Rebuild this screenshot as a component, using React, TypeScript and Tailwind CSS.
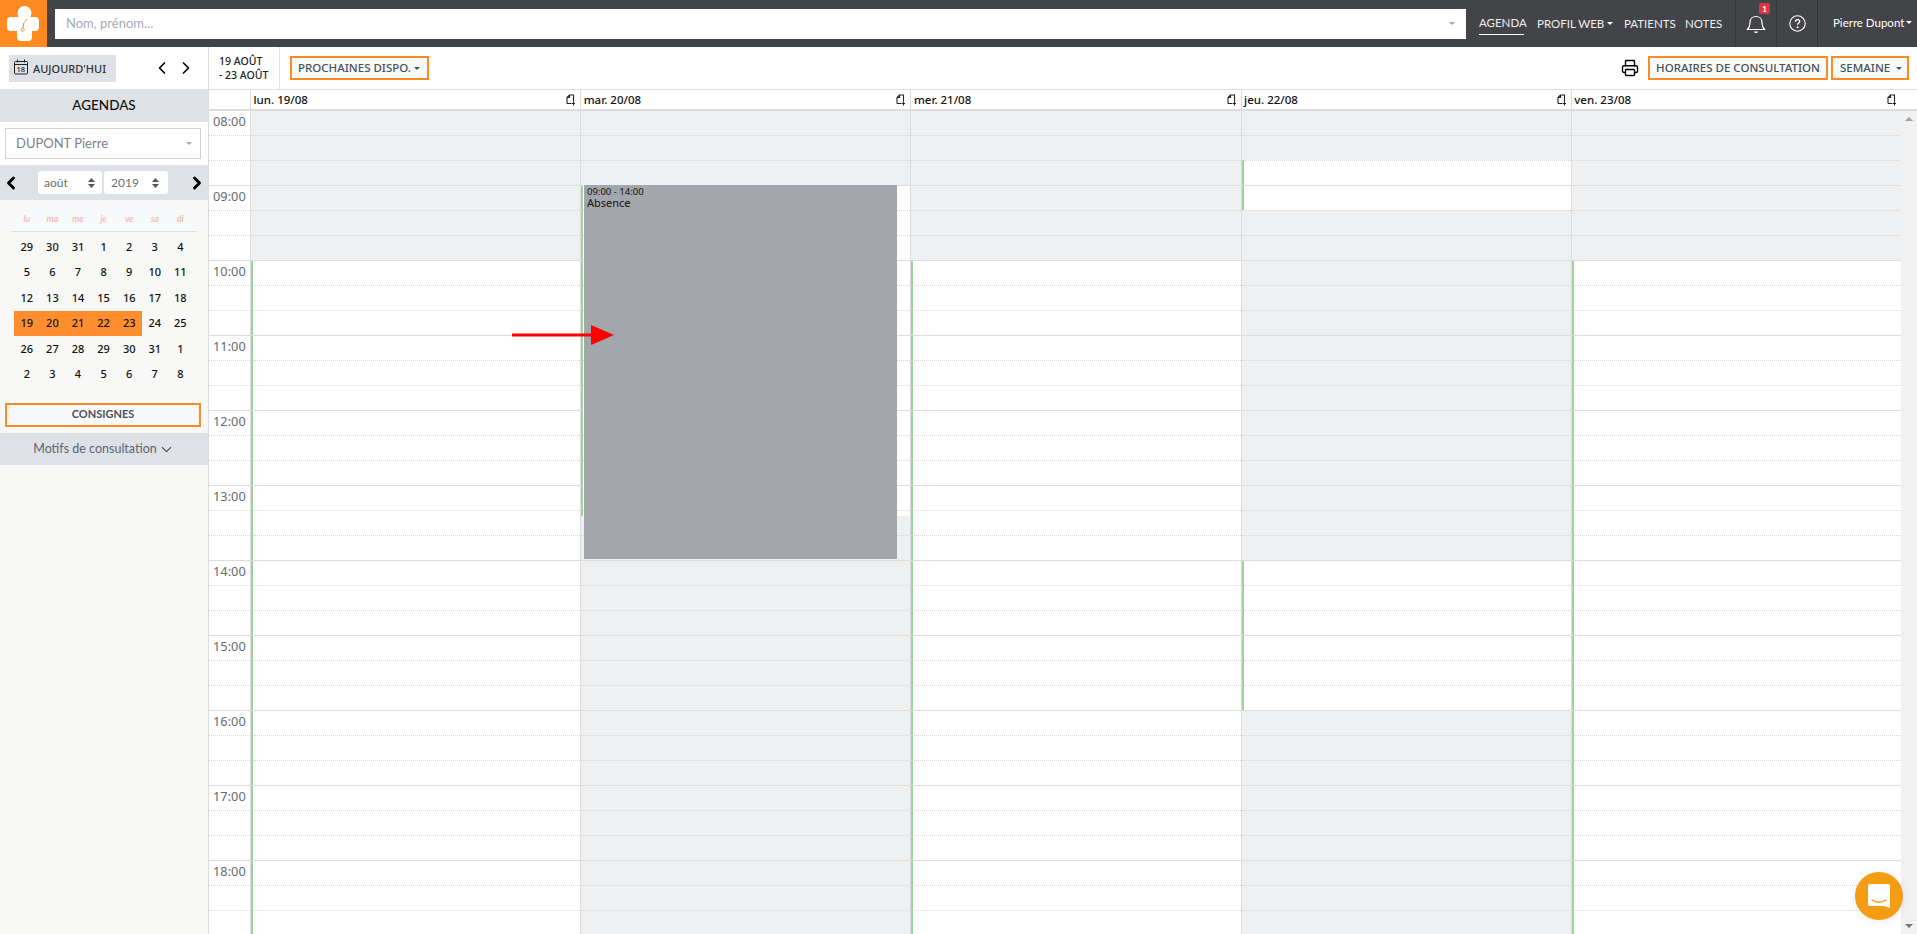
import { ChevronDown, ChevronLeft, ChevronRight, Printer } from "lucide-react";

const SANS = "font-['Lato','Open_Sans',sans-serif]";
const NOTO = "font-['Noto_Sans','Open_Sans',sans-serif]";

const CAL_WEEKS = [
  [29, 30, 31, 1, 2, 3, 4],
  [5, 6, 7, 8, 9, 10, 11],
  [12, 13, 14, 15, 16, 17, 18],
  [19, 20, 21, 22, 23, 24, 25],
  [26, 27, 28, 29, 30, 31, 1],
  [2, 3, 4, 5, 6, 7, 8],
];
const WEEK_DAYS = ["lu", "ma", "me", "je", "ve", "sa", "di"];
const HOURS = ["08:00", "09:00", "10:00", "11:00", "12:00", "13:00", "14:00", "15:00", "16:00", "17:00", "18:00"];
const SLOTS = Array.from({ length: 33 }, (_, i) => i);

// each day is a stack of [height, open] blocks from 08:00 down
const DAYS: { label: string; blocks: [number, boolean][] }[] = [
  { label: "lun. 19/08", blocks: [[149, false], [680, true]] },
  { label: "mar. 20/08", blocks: [[74, false], [331, true], [420, false]] },
  { label: "mer. 21/08", blocks: [[149, false], [680, true]] },
  { label: "jeu. 22/08", blocks: [[49, false], [50, true], [350, false], [150, true], [230, false]] },
  { label: "ven. 23/08", blocks: [[149, false], [680, true]] },
];

function Logo() {
  return (
    <svg width="47" height="47" viewBox="0 0 47 47">
      <circle cx="24.5" cy="13" r="7" fill="#fff" />
      <rect x="7" y="17" width="32" height="14" rx="4" fill="#fff" />
      <rect x="17" y="17" width="15" height="24" rx="4" fill="#fff" />
      <path d="M27 19c-1 2-3 3-3.5 5-.3 1.5 0 2.5-.5 4" fill="none" stroke="#ff8a22" strokeWidth="1" />
      <circle cx="22.7" cy="29.7" r="1.5" fill="none" stroke="#ff8a22" strokeWidth="1" />
    </svg>
  );
}

function Caret({ className }: { className: string }) {
  return <span className={`inline-block border-x-[3.5px] border-t-[3.5px] border-x-transparent ${className}`} />;
}

function UpDown() {
  return (
    <svg width="7" height="10" viewBox="0 0 7 10" fill="#555">
      <path d="M3.5 0 7 4H0zM3.5 10 0 6h7z" />
    </svg>
  );
}

function NoteIcon() {
  return (
    <svg width="10" height="12" viewBox="0 0 10 12" fill="none" stroke="#222" strokeWidth="1.1" className="shrink-0">
      <path d="M1 9.5V3.5L3.5 1H7.5v6.5" />
      <path d="M1 9.5h4.5M3.5 1v2.5H1" />
      <path d="M7.5 7.5v4M6 9.5h3" />
    </svg>
  );
}

function Bell() {
  return (
    <svg width="20" height="21" viewBox="0 0 20 21" fill="none" stroke="#fff" strokeWidth="1.2">
      <path d="M1.5 16.5c2-2 2.5-3 2.5-7 0-3.5 2.5-6 6-6s6 2.5 6 6c0 4 .5 5 2.5 7z" />
      <path d="M8.5 18.5c.5 1.2 2.5 1.2 3 0" strokeWidth="1.4" />
    </svg>
  );
}

function ChatIcon() {
  return (
    <svg width="24" height="27" viewBox="0 0 24 27">
      <path d="M3 1h18a2 2 0 0 1 2 2v22l-6-2H3a2 2 0 0 1-2-2V3a2 2 0 0 1 2-2z" fill="#fff" />
      <path d="M5 17c4 3 10 3 14 0" fill="none" stroke="#f49c14" strokeWidth="1.4" strokeLinecap="round" />
    </svg>
  );
}

function OrangeButton({ label, caret, className }: { label: string; caret?: boolean; className: string }) {
  return (
    <div className={`flex h-[24px] items-center whitespace-nowrap border-2 border-[#ff8a22] bg-[#f8f9fb] text-[11.5px] font-medium text-[#4a5058] ${NOTO} ${className}`}>
      <span>{label}</span>
      {caret && <Caret className="border-t-[#4a5058]" />}
    </div>
  );
}

function TopBar() {
  return (
    <div className={`flex h-[47px] items-center bg-[#434447] text-white ${SANS}`}>
      <div className="flex h-[47px] w-[47px] shrink-0 items-center justify-center bg-[#ff8a22]">
        <Logo />
      </div>
      <div className="ml-[8px] flex h-[30px] w-[1411px] shrink-0 items-center justify-between bg-white px-[11px]">
        <span className="text-[13px] text-[#a8abb0]">Nom, prénom...</span>
        <Caret className="border-t-[#a8a8a8]" />
      </div>
      <nav className="ml-[13px] flex items-center text-[11.5px] text-[#eceef0]">
        <span className="w-[58px] pt-[1px]">
          <span className="block w-[45px] border-b border-white pb-[1px] leading-[20px]">AGENDA</span>
        </span>
        <span className="flex w-[87px] items-center gap-[3px]">
          PROFIL WEB
          <Caret className="border-t-white" />
        </span>
        <span className="w-[61px]">PATIENTS</span>
        <span className="w-[50px]">NOTES</span>
      </nav>
      <div className="relative flex h-[47px] w-[41px] items-center justify-center border-l border-[#333437]">
        <Bell />
        <span className="absolute left-[23px] top-[3px] flex h-[11px] w-[11px] items-center justify-center rounded-[2px] bg-[#dc3545] text-[8px] font-bold leading-none">1</span>
      </div>
      <div className="flex h-[47px] w-[41px] items-center justify-center border-l border-[#333437]">
        <svg width="17" height="17" viewBox="0 0 17 17" fill="none" stroke="#fff" strokeWidth="1.1">
          <circle cx="8.5" cy="8.5" r="7.7" />
          <path d="M6.5 6.8c0-2.8 4.2-2.8 4.2-.3 0 1.6-2.1 1.6-2.1 3.3" strokeWidth="1.3" />
          <circle cx="8.6" cy="12.2" r=".5" fill="#fff" />
        </svg>
      </div>
      <div className="flex h-[47px] flex-1 items-center gap-[2px] border-l border-[#333437] pb-[2px] pl-[15px] text-[11.5px]">
        Pierre Dupont
        <Caret className="border-t-white" />
      </div>
    </div>
  );
}

function Sidebar() {
  return (
    <aside className={`flex w-[209px] shrink-0 flex-col border-r border-[#ddd] bg-[#f8f8f6] ${SANS}`}>
      <div className="flex h-[42px] items-center bg-white pl-[9px]">
        <div className={`flex h-[27px] w-[107px] items-center gap-[5px] whitespace-nowrap bg-[#dee1e6] pl-[5px] text-[11px] font-medium text-[#333] ${NOTO}`}>
          <svg width="14" height="16" viewBox="0 0 14 16" fill="none" stroke="#222" strokeWidth="1" className="-mt-[2px]">
            <rect x=".5" y="2.5" width="13" height="12.5" rx="1" />
            <path d="M.5 5.5h13M3.5 .5v3M10.5 .5v3" />
            <text x="2.5" y="13" fontSize="7.5" fill="#222" stroke="none">18</text>
          </svg>
          <span className="pt-[2px]">AUJOURD'HUI</span>
        </div>
        <ChevronLeft size={20} strokeWidth={2} className="ml-[36px] text-black" />
        <ChevronRight size={20} strokeWidth={2} className="ml-[4px] text-black" />
      </div>
      <div className="flex h-[33px] items-center justify-center bg-[#dee1e6] pb-[1px] text-[13.5px] font-medium text-[#111]">AGENDAS</div>
      <div className="flex h-[43px] items-center bg-white pl-[5px] pr-[7px]">
        <div className="flex h-[31px] w-full items-center justify-between border border-[#cfd3d9] bg-white pl-[10px] pr-[8px] text-[13px] text-[#7c8187]">
          DUPONT Pierre
          <Caret className="border-t-[#a8a8a8]" />
        </div>
      </div>
      <div className="flex h-[35px] items-center bg-[#dee1e6]">
        <ChevronLeft size={20} strokeWidth={3.5} className="ml-[1px] w-[20px] text-black" />
        <div className="ml-[17px] flex h-[23px] w-[64px] items-center justify-between rounded-[3px] bg-white pl-[6px] pr-[7px] text-[12px] text-[#6b7076]">
          août
          <UpDown />
        </div>
        <div className="ml-[2px] flex h-[23px] w-[64px] items-center justify-between rounded-[3px] bg-white pl-[7px] pr-[9px] text-[12px] text-[#6b7076]">
          2019
          <UpDown />
        </div>
        <ChevronRight size={20} strokeWidth={3.5} className="ml-[19px] text-black" />
      </div>
      <div className="mx-[11px] mt-[7px] flex h-[25px] items-center border-b border-[#dee1e6] bg-[#f8f9fb] pl-[3px] pr-[1px]">
        {WEEK_DAYS.map((d) => (
          <span key={d} className="w-[25.6px] text-center text-[9px] italic text-[#ffa99a]">{d}</span>
        ))}
      </div>
      <div className="ml-[14px] mt-[2px]">
        {CAL_WEEKS.map((week, w) => (
          <div key={w} className="flex h-[25.5px]">
            {week.map((d, i) => (
              <span
                key={i}
                className={`flex h-full w-[25.6px] items-center justify-center text-[11px] font-medium text-[#111] ${NOTO} ${w === 3 && i < 5 ? "bg-[#ff8f2e]" : ""}`}
              >
                {d}
              </span>
            ))}
          </div>
        ))}
      </div>
      <div className="ml-[5px] mr-[7px] mt-[16px] flex h-[24px] items-center justify-center border-2 border-[#ff8a22] bg-[#f8f9fb] pb-[1px] text-[11px] font-bold text-[#4a5058]">
        CONSIGNES
      </div>
      <div className="mt-[6px] flex h-[32px] items-center justify-center gap-[1px] bg-[#dee1e6] text-[12.5px] text-[#5d6570]">
        Motifs de consultation
        <ChevronDown size={17} strokeWidth={1.5} className="text-[#444]" />
      </div>
    </aside>
  );
}

function Toolbar() {
  return (
    <div className={`flex h-[42px] items-center bg-white ${NOTO}`}>
      <div className="flex h-[42px] w-[71px] shrink-0 flex-col justify-center border-r border-[#e3e3e3] pl-[10px] text-[10.5px] font-medium leading-[14px] text-[#222]">
        <span>19 AOÛT</span>
        <span>- 23 AOÛT</span>
      </div>
      <OrangeButton label="PROCHAINES DISPO." caret className="ml-[10px] w-[139px] gap-[3px] pl-[6px]" />
      <div className="flex-1" />
      <Printer size={18} strokeWidth={1.8} className="mr-[9px] text-black" />
      <OrangeButton label="HORAIRES DE CONSULTATION" className="w-[180px] justify-center" />
      <OrangeButton label="SEMAINE" caret className="ml-[3px] mr-[8px] w-[78px] gap-[6px] pl-[7px]" />
    </div>
  );
}

function DayColumn({ blocks }: { blocks: [number, boolean][] }) {
  return (
    <div className="relative min-w-0 flex-1 border-l border-[#ddd]">
      {blocks.map(([h, open], i) => (
        <div
          key={i}
          style={{ height: h }}
          className={open ? "border-l-2 border-[#9dd49c] bg-white" : "bg-[#eff0f2]"}
        />
      ))}
      <div className="absolute inset-0">
        {SLOTS.map((s) => (
          <div key={s} className={`h-[25px] border-b ${s % 3 === 2 ? "border-solid border-[#ddd]" : "border-dotted border-[#d5d5d5]"}`} />
        ))}
      </div>
    </div>
  );
}

function Calendar() {
  return (
    <div className={`relative flex h-[845px] min-w-0 flex-1 flex-col overflow-hidden ${NOTO}`}>
      <div className="flex h-[22px] shrink-0 border-y border-[#ddd] border-b-[2px] pr-[16px]">
        <div className="w-[41px] shrink-0" />
        {DAYS.map((d) => (
          <div key={d.label} className="flex min-w-0 flex-1 items-center justify-between border-l border-[#ddd] pl-[2.5px] pr-[4px] text-[11.5px] font-medium text-[#111]">
            {d.label}
            <NoteIcon />
          </div>
        ))}
      </div>
      <div className="flex min-h-0 flex-1">
        <div className="flex min-w-0 flex-1">
          <div className="w-[41px] shrink-0">
            {HOURS.map((h) => (
              <div key={h} className="h-[75px] border-b border-[#ddd]">
                <div className="h-[25px] border-b border-dotted border-[#d5d5d5] pl-[4px] text-[12.8px] leading-[20px] text-[#666b72]">{h}</div>
                <div className="h-[25px] border-b border-dotted border-[#d5d5d5]" />
              </div>
            ))}
          </div>
          {DAYS.map((d) => (
            <DayColumn key={d.label} blocks={d.blocks} />
          ))}
        </div>
        <div className="flex w-[16px] shrink-0 flex-col items-center justify-between bg-[#f1f1f1] py-[6px]">
          <span className="border-x-[4px] border-b-[4px] border-x-transparent border-b-[#a3a3a3]" />
          <span className="border-x-[4px] border-t-[4px] border-x-transparent border-t-[#777]" />
        </div>
      </div>

      {/* absence block over the tuesday column */}
      <div className="absolute left-[375px] top-[96px] h-[374px] w-[313px] bg-[#a3a6aa] pl-[3px] text-[#111]">
        <div className="text-[9.5px] leading-[13px]">09:00 - 14:00</div>
        <div className="-mt-[1px] text-[11px] leading-[11px]">Absence</div>
      </div>
      {/* red annotation arrow */}
      <svg width="102" height="22" viewBox="0 0 102 22" className="absolute left-[303px] top-[235px]">
        <path d="M0 9.5h79v3H0z" fill="#ff0000" />
        <path d="M79 1l23 10-23 10z" fill="#ff0000" />
      </svg>
      <div className="absolute left-[1646px] top-[783px] flex h-[48px] w-[48px] items-center justify-center rounded-full bg-[#f49c14] shadow-[0_1px_10px_rgba(0,0,0,0.08)]">
        <ChatIcon />
      </div>
    </div>
  );
}

export default function App() {
  return (
    <div className="h-[934px] overflow-hidden bg-white">
      <TopBar />
      <div className="flex h-[887px]">
        <Sidebar />
        <div className="flex min-w-0 flex-1 flex-col">
          <Toolbar />
          <Calendar />
        </div>
      </div>
    </div>
  );
}
